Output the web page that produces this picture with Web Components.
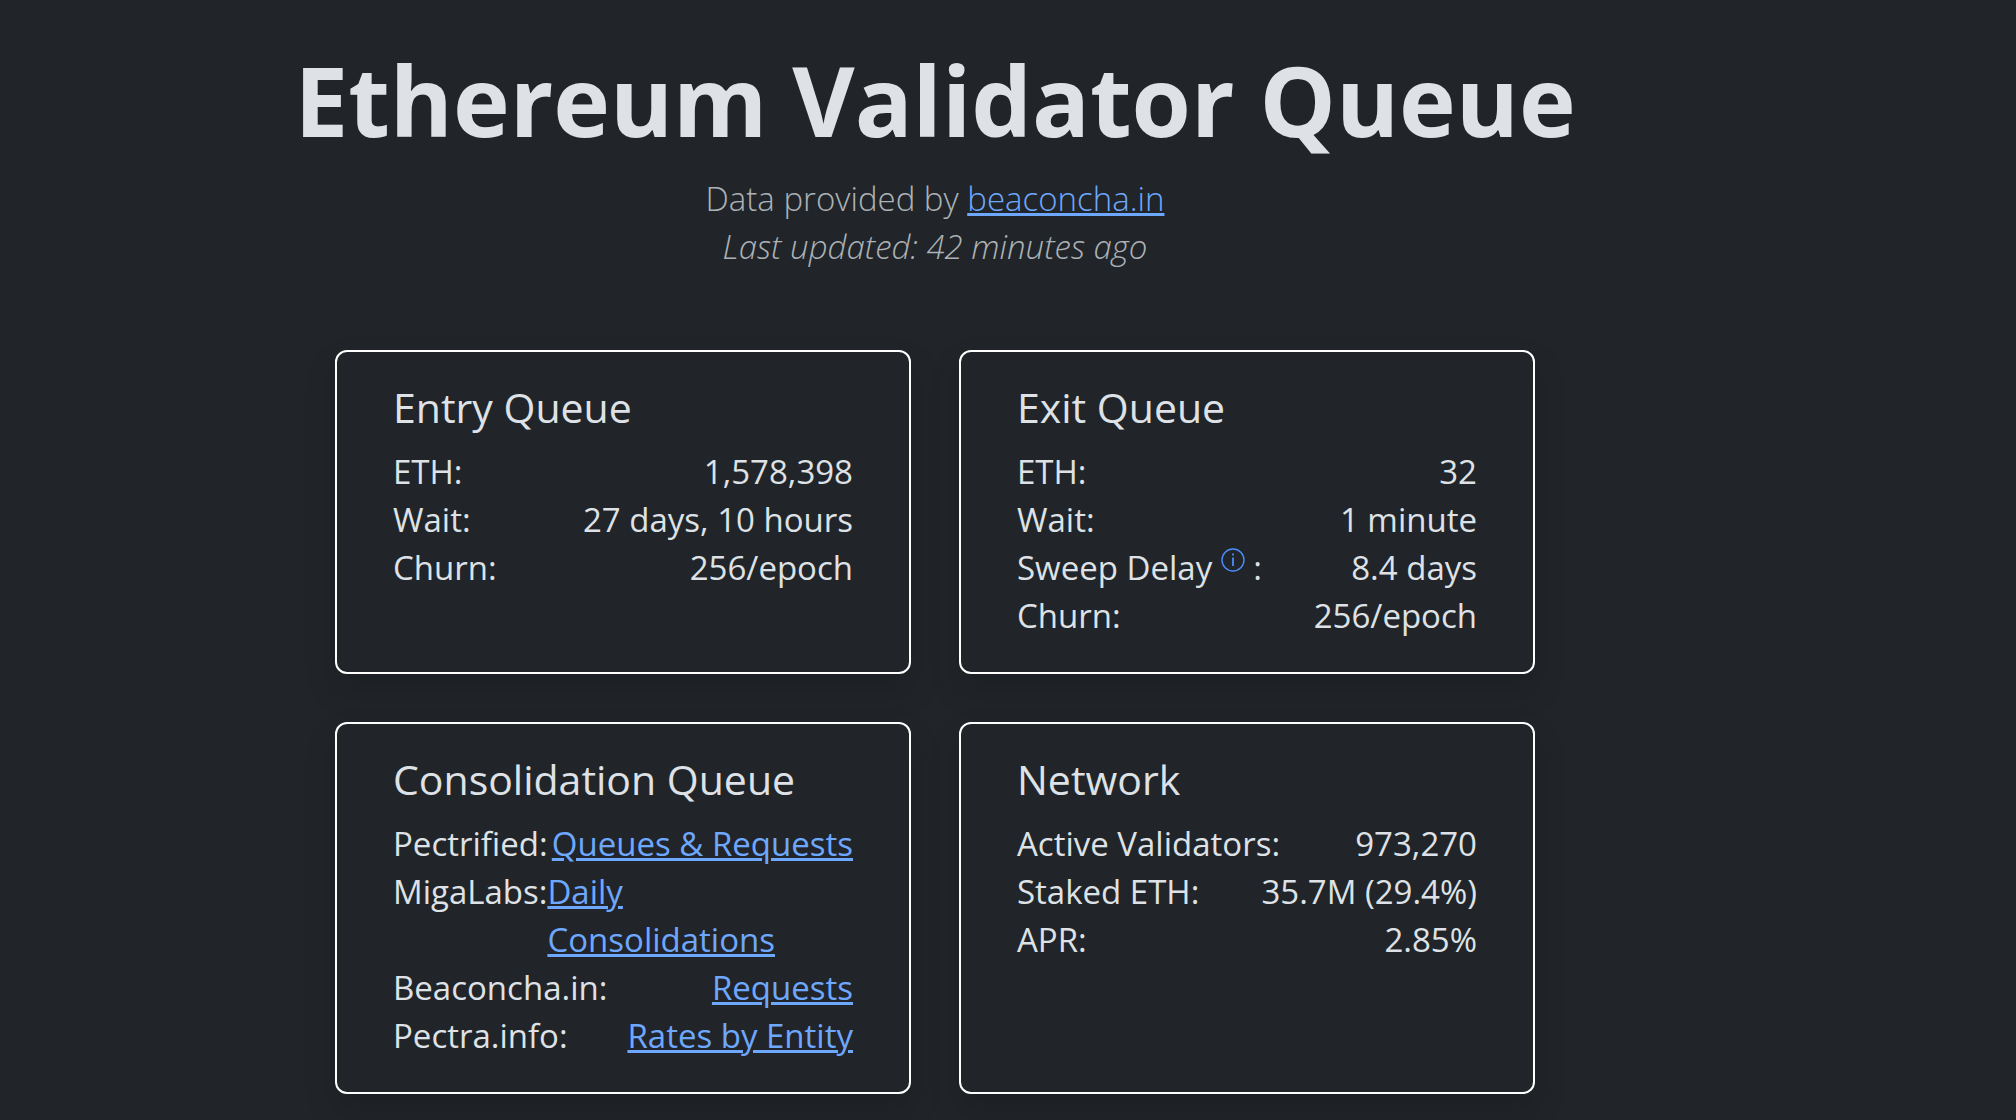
<!DOCTYPE html>
<html lang="en">
<head>
<meta charset="utf-8">
<title>Ethereum Validator Queue</title>
<style>
  html { background: #212529; }
  body {
    margin: 0;
    color: #dee2e6;
    font: 400 33px/48px "Open Sans", "Noto Sans", sans-serif;
    --link: #6ea8fe;
  }
</style>
</head>
<body>
<queue-page>
  <page-header slot="header" heading="Ethereum Validator Queue" source="beaconcha.in" updated="42 minutes ago"></page-header>
  <queue-card heading="Entry Queue">
    <stat-row label="ETH">1,578,398</stat-row>
    <stat-row label="Wait">27 days, 10 hours</stat-row>
    <stat-row label="Churn">256/epoch</stat-row>
  </queue-card>
  <queue-card heading="Exit Queue">
    <stat-row label="ETH">32</stat-row>
    <stat-row label="Wait">1 minute</stat-row>
    <stat-row label="Sweep Delay"><info-icon slot="hint"></info-icon>8.4 days</stat-row>
    <stat-row label="Churn">256/epoch</stat-row>
  </queue-card>
  <queue-card heading="Consolidation Queue">
    <stat-row label="Pectrified" href="#pectrified">Queues &amp; Requests</stat-row>
    <stat-row label="MigaLabs" href="#migalabs">Daily Consolidations</stat-row>
    <stat-row label="Beaconcha.in" href="#beaconchain">Requests</stat-row>
    <stat-row label="Pectra.info" href="#pectra">Rates by Entity</stat-row>
  </queue-card>
  <queue-card heading="Network">
    <stat-row label="Active Validators">973,270</stat-row>
    <stat-row label="Staked ETH">35.7M (29.4%)</stat-row>
    <stat-row label="APR">2.85%</stat-row>
  </queue-card>
</queue-page>
<script>
  class QueuePage extends HTMLElement {
    constructor() {
      super();
      this.attachShadow({ mode: "open" }).innerHTML = `
        <style>
          :host { display: block; padding: 40px 146px 26px 0; }
          main {
            display: grid;
            grid-template-columns: repeat(2, minmax(0, 1fr));
            gap: 48px;
            max-width: 1200px;
            margin: 0 auto;
          }
        </style>
        <slot name="header"></slot>
        <main><slot></slot></main>`;
    }
  }

  class PageHeader extends HTMLElement {
    constructor() {
      super();
      this.attachShadow({ mode: "open" }).innerHTML = `
        <style>
          :host { display: block; text-align: center; margin-bottom: 79px; }
          h1 { margin: 0 0 15px; font-size: 96px; line-height: 120px; font-weight: 700; }
          p { margin: 0; font-weight: 300; color: rgba(222, 226, 230, .75); }
          a { color: var(--link); text-decoration-thickness: 3px; text-underline-offset: 2px; }
        </style>
        <header>
          <h1>${this.getAttribute("heading")}</h1>
          <p>Data provided by <a href="#source">${this.getAttribute("source")}</a></p>
          <p><em>Last updated: ${this.getAttribute("updated")}</em></p>
        </header>`;
    }
  }

  class QueueCard extends HTMLElement {
    constructor() {
      super();
      this.attachShadow({ mode: "open" }).innerHTML = `
        <style>
          :host {
            display: block;
            padding: 33px 56px 32px;
            border: 2px solid #fff;
            border-radius: 12px;
            box-shadow: 0 16px 32px rgba(0, 0, 0, .15);
          }
          h2 { margin: 0 0 19px; font-size: 41px; line-height: 44px; font-weight: 400; }
        </style>
        <h2>${this.getAttribute("heading")}</h2>
        <slot></slot>`;
    }
  }

  class StatRow extends HTMLElement {
    constructor() {
      super();
      const href = this.getAttribute("href");
      const value = href ? `<a href="${href}"><slot></slot></a>` : `<span><slot></slot></span>`;
      this.attachShadow({ mode: "open" }).innerHTML = `
        <style>
          :host { display: flex; justify-content: space-between; }
          .label { white-space: nowrap; }
          a { color: var(--link); text-decoration-thickness: 3px; text-underline-offset: 2px; }
        </style>
        <span class="label">${this.getAttribute("label")}<slot name="hint"></slot>:</span>${value}`;
    }
  }

  class InfoIcon extends HTMLElement {
    constructor() {
      super();
      this.attachShadow({ mode: "open" }).innerHTML = `
        <style>
          :host { display: inline-block; margin: 0 8px 0 9px; line-height: 0; vertical-align: 8px; }
          button { display: block; padding: 0; border: 0; background: none; color: var(--link); }
          svg { display: block; }
        </style>
        <button type="button" aria-label="About sweep delay">
          <svg width="24" height="24" viewBox="0 0 24 24" fill="none" stroke="#4b8df8">
            <circle cx="12" cy="12" r="11" stroke-width="1.4"/>
            <path d="M12 9.500v8.500M12 5.500v2" stroke-width="1.800"/>
          </svg>
        </button>`;
    }
  }

  customElements.define("queue-page", QueuePage);
  customElements.define("page-header", PageHeader);
  customElements.define("queue-card", QueueCard);
  customElements.define("stat-row", StatRow);
  customElements.define("info-icon", InfoIcon);
</script>
</body>
</html>
